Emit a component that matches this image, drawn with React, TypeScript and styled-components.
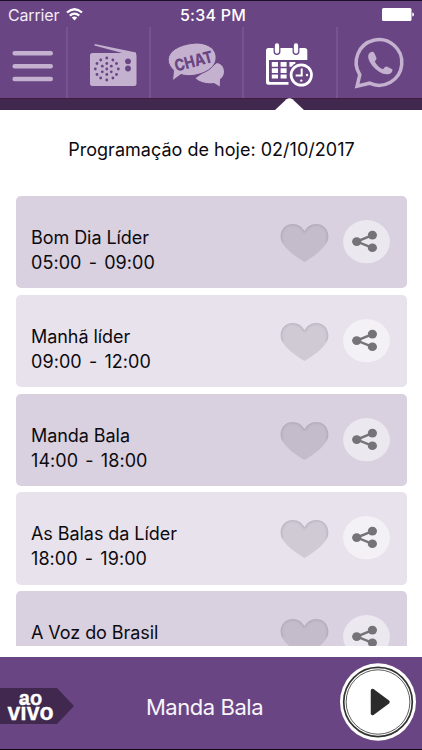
import React from "react";
import styled, { createGlobalStyle } from "styled-components";

const colors = {
  purple: "#6a4583",
  divider: "#77538f",
  deep: "#41284f",
  lilac: "#c3b1cf",
};

const GlobalStyle = createGlobalStyle`
  * { box-sizing: border-box; }
  body { margin: 0; background: #fff; }
  svg { display: block; }
  button { border: 0; padding: 0; background: none; font: inherit; }
`;

const Screen = styled.div`
  width: 422px;
  height: 750px;
  overflow: hidden;
  display: flex;
  flex-direction: column;
  font-family: Inter, "Liberation Sans", sans-serif;
  color: #0c0a0e;
`;

const StatusBar = styled.header`
  height: 27px;
  flex: none;
  border-top: 1px solid #1c1026;
  background: ${colors.purple};
  color: #fff;
  display: grid;
  grid-template-columns: 1fr auto 1fr;
  align-items: center;
  padding: 1px 8px 0 8px;
  font-size: 16px;
`;

const Carrier = styled.div`
  display: flex;
  align-items: center;
  gap: 7px;
  color: #f3ecf7;
  letter-spacing: -0.15px;
`;

const Clock = styled.div`
  font-weight: 500;
  letter-spacing: 0.25px;
  padding-left: 4px;
`;

const Battery = styled.div`
  justify-self: end;
`;

const Nav = styled.nav`
  height: 71px;
  flex: none;
  display: grid;
  grid-template-columns: 68px 83px 93px 94px 84px;
  background: ${colors.purple};
`;

const NavItem = styled.button<{ $active?: boolean }>`
  color: ${(p) => (p.$active ? "#fff" : colors.lilac)};
  border-right: 2px solid ${colors.divider};
  &:last-child { border-right: 0; }
  svg { width: 100%; height: 71px; }
`;

const Strip = styled.div`
  height: 12px;
  flex: none;
  position: relative;
  border-top: 1px solid #421a3b;
  background: ${colors.deep};
`;

const Pointer = styled.svg`
  position: absolute;
  left: 274px;
  top: -1px;
`;

const Main = styled.main`
  height: 536px;
  flex: none;
  overflow: hidden;
  padding: 0 15px 0 16px;
`;

const Heading = styled.h1`
  margin: 0;
  height: 86px;
  padding: 28px 0 0;
  font-size: 18px;
  line-height: 24px;
  font-weight: 400;
  text-align: center;
  letter-spacing: 0.02px;
`;

const List = styled.div`
  display: flex;
  flex-direction: column;
  gap: 6.4px;
`;

const Card = styled.article<{ $light: boolean }>`
  height: 92.4px;
  flex: none;
  border-radius: 5px;
  background: ${(p) => (p.$light ? "#e8e2ed" : "#d9d0e0")};
  display: flex;
  padding-left: 15px;
`;

const Info = styled.div`
  flex: 1;
  padding-top: 29px;
  font-size: 18px;
  line-height: 25px;
`;

const Title = styled.div`
  letter-spacing: -0.06px;
`;

const Time = styled.div`
  letter-spacing: 0.07px;
  word-spacing: 2px;
`;

const IconButton = styled.button<{ $gap: number; $top: number }>`
  align-self: flex-start;
  margin: ${(p) => p.$top}px ${(p) => p.$gap}px 0 0;
`;

const Player = styled.footer`
  height: 93px;
  flex: none;
  margin-top: 11px;
  background: ${colors.purple};
  border-bottom: 1px solid #0c0710;
  display: flex;
  align-items: center;
  justify-content: space-between;
`;

const Live = styled.div`
  width: 74px;
  height: 36px;
  margin-top: 6px;
  padding: 3px 13px 0 0;
  background: ${colors.deep};
  clip-path: polygon(0 0, 57px 0, 100% 50%, 57px 100%, 0 100%);
  color: #fff;
  font-family: "Liberation Sans", Arial, sans-serif;
  font-weight: 700;
  text-align: center;
`;

const LiveWord = styled.div<{ $size: number }>`
  height: 14px;
  font-size: ${(p) => p.$size}px;
  line-height: 14px;
  -webkit-text-stroke: 0.3px #fff;
`;

const NowPlaying = styled.div`
  padding: 7px 5px 0 0;
  font-size: 22px;
  letter-spacing: -0.45px;
  color: #f8f4fa;
`;

const PlayButton = styled.button`
  margin: -2px 6px 0 0;
`;

const shows = [
  ["Bom Dia Líder", "05:00 - 09:00"],
  ["Manhã líder", "09:00 - 12:00"],
  ["Manda Bala", "14:00 - 18:00"],
  ["As Balas da Líder", "18:00 - 19:00"],
  ["A Voz do Brasil", ""],
];

const speaker = [
  [106.8, 58], [100.7, 60], [112.9, 60], [97, 63.5], [116.5, 63.5], [102.3, 66.2], [111.3, 66.2],
  [106.8, 63.5], [106.8, 69], [95.3, 69], [118.3, 69], [97, 74.5], [116.5, 74.5],
  [102.3, 71.8], [111.3, 71.8], [106.8, 74.5], [100.7, 78], [112.9, 78], [106.8, 80],
];

const Wifi = () => (
  <svg width="17" height="13" viewBox="0 0 17 13" fill="none" stroke="#fff" strokeWidth="2.2">
    <path d="M1 4.5Q8.5-2 16 4.5M3.8 7.6q4.7-4 9.4 0" />
    <path d="M5.8 9.6q2.7-2 5.4 0L8.5 12.4z" fill="#fff" stroke="none" />
  </svg>
);

const MenuIcon = () => (
  <svg viewBox="0 27 66 71" stroke="currentColor" strokeWidth="4.6" strokeLinecap="round">
    <path d="M14.7 53.3h36M14.7 66.3h36M14.7 79h36" />
  </svg>
);

const RadioIcon = () => (
  <svg viewBox="68 27 81 71" fill="currentColor">
    <path d="M94.8 43.9 136 52.6v2h-8L94.3 45.6z" />
    <rect x="90" y="53" width="46.5" height="33" rx="2.5" />
    <g fill={colors.purple}>
      {speaker.map(([x, y]) => <circle key={`${x}-${y}`} cx={x} cy={y} r="1.4" />)}
      <circle cx="128" cy="61.3" r="2.9" />
      <circle cx="128" cy="68.5" r="2.9" />
    </g>
  </svg>
);

const ChatIcon = () => (
  <svg viewBox="151 27 91 71" fill="currentColor">
    <path d="M217 63c5 1 7 5 7 8.800 0 3-1.500 5.500-4 7.500l-.2 7.200-5.800-3.500c-7 1-14-.6-18.500-4.800z" />
    <path d="M193 43.300c11-1.500 22 3.500 23 12.500 1.200 11-10 17.500-22 19.500-5 .8-10 .2-13-.8l-8.500 6.300 1-10.500c-3-3-5.500-6.500-5.300-11 .5-8.500 11-14.500 24.800-16z" stroke={colors.purple} strokeWidth="1" />
    <text x="193.500" y="67" fontFamily="Inter, sans-serif" fontSize="16.500" fontWeight="800" textAnchor="middle" textLength="39" lengthAdjust="spacingAndGlyphs" fill={colors.purple} transform="rotate(-15 193.500 61)">CHAT</text>
  </svg>
);

const ScheduleIcon = () => (
  <svg viewBox="244 27 92 71" fill="currentColor">
    <path d="M268.500 48h36q2.800 0 2.800 2.800V60H269v20.500q0 1.500 1.500 1.500h18v2.800h-20q-2.500 0-2.500-2.500V50.800q0-2.800 2.500-2.800z" />
    <path d="M271.800 62h6.200v4.700h-6.200zm8.800 0h6v4.700h-6zm8.800 0h6v4.700h-6zm-17.600 6.200h6.200v4.700h-6.200zm8.800 0h6v4.700h-6zm-8.800 6.200h6.200v4h-6.200zm8.800 0h6v4h-6z" />
    <g stroke={colors.purple} strokeWidth="1.300">
      <rect x="274.200" y="42.600" width="5.600" height="11.700" rx="2.800" />
      <rect x="293.200" y="42.600" width="5.600" height="11.700" rx="2.800" />
    </g>
    <circle cx="301.300" cy="75" r="12.800" fill={colors.purple} />
    <circle cx="301.300" cy="75" r="10.200" fill="none" stroke="currentColor" strokeWidth="2.700" />
    <path d="M301.700 68.500v7h-6" fill="none" stroke="currentColor" strokeWidth="2" />
    <circle cx="307" cy="75" r="1.200" />
    <circle cx="301.300" cy="80.600" r="1.200" />
  </svg>
);

const WhatsappIcon = () => (
  <svg viewBox="338 27 84 71">
    <path d="M359.800 74.700a22.800 22.800 0 1 1 9.800 8.500l-12.500 3z" fill="none" stroke="currentColor" strokeWidth="3.500" />
    <path d="M370.500 52.300c1.500-1 3-.8 3.800.8l2 4.300c.6 1.500-.2 2.600-1.600 3.900 1.500 3.700 4.500 6.500 8.300 8 1.500-2 2.600-3.200 4.200-2.600l4.600 2.200c1.300.7.700 2.300-.3 3.500-5 5-13.500-.6-17.500-4.800-4.500-4.800-8.500-12.300-3.500-15.300z" fill="currentColor" />
  </svg>
);

const HeartIcon = () => (
  <svg width="49" height="40" viewBox="0 0 49 40">
    <defs>
      <clipPath id="heartClip">
        <path d="M24.500 39C17 34.500 7 28 2 19.500-2 11 3 1 12.500 1c6 0 9.500 3 12 7.300C27 4 30.500 1 36.500 1 46 1 51 11 47 19.500 42 28 32 34.500 24.500 39z" />
      </clipPath>
      <filter id="inset"><feGaussianBlur stdDeviation="1" /></filter>
    </defs>
    <g clipPath="url(#heartClip)">
      <rect width="49" height="40" fill="#77737a" fillOpacity=".21" />
      <path d="M2 19.500C-2 11 3 1 12.500 1c6 0 9.500 3 12 7.300C27 4 30.500 1 36.500 1 46 1 51 11 47 19.500" fill="none" stroke="#6e6673" strokeOpacity=".28" strokeWidth="2" filter="url(#inset)" />
    </g>
  </svg>
);

const ShareIcon = () => (
  <svg width="47" height="44" viewBox="0 0 47 44">
    <ellipse cx="23.500" cy="21.700" rx="23.400" ry="21.600" fill="#fff" fillOpacity=".5" />
    <path d="M29.500 15.200 13.800 21.600l15.700 6.200" fill="none" stroke="#767378" strokeWidth="2.400" />
    <g fill="#767378">
      <ellipse cx="29.400" cy="15.100" rx="4.600" ry="4.300" />
      <ellipse cx="13.700" cy="21.600" rx="4.600" ry="4.300" />
      <ellipse cx="29.400" cy="27.700" rx="4.600" ry="4.300" />
    </g>
  </svg>
);

const PlayIcon = () => (
  <svg width="76" height="78" viewBox="0 0 76 78">
    <ellipse cx="38" cy="39" rx="38" ry="38.800" fill="#fff" />
    <g fill="none" stroke="#333">
      <ellipse cx="38" cy="39" rx="34.300" ry="34.600" strokeWidth="1.700" />
      <ellipse cx="38" cy="39" rx="31.900" ry="32.200" strokeWidth=".8" />
    </g>
    <path d="M32.500 27.500 48 39 32.500 50.500z" fill="#2b2b2b" stroke="#2b2b2b" strokeWidth="3.500" strokeLinejoin="round" />
  </svg>
);

export default function App() {
  return (
    <>
      <GlobalStyle />
      <Screen>
        <StatusBar>
          <Carrier>Carrier <Wifi /></Carrier>
          <Clock>5:34 PM</Clock>
          <Battery>
            <svg width="32" height="13" viewBox="0 0 32 13" fill="#fff">
              <rect width="29.500" height="13" rx="1.500" />
              <path d="M30.300 4.500q1.700 0 1.700 2t-1.700 2z" />
            </svg>
          </Battery>
        </StatusBar>
        <Nav>
          <NavItem aria-label="Menu"><MenuIcon /></NavItem>
          <NavItem aria-label="Rádio"><RadioIcon /></NavItem>
          <NavItem aria-label="Chat"><ChatIcon /></NavItem>
          <NavItem aria-label="Programação" $active><ScheduleIcon /></NavItem>
          <NavItem aria-label="WhatsApp"><WhatsappIcon /></NavItem>
        </Nav>
        <Strip>
          <Pointer width="31" height="13" viewBox="0 0 31 13" fill="#fff">
            <path d="M0 13 12.500 1.300q3-2.300 6 0L31 13z" />
          </Pointer>
        </Strip>
        <Main>
          <Heading>Programação de hoje: 02/10/2017</Heading>
          <List>
            {shows.map(([title, time], i) => (
              <Card key={title} $light={i % 2 === 1}>
                <Info>
                  <Title>{title}</Title>
                  <Time>{time}</Time>
                </Info>
                <IconButton $gap={13.500} $top={27} aria-label="Favoritar"><HeartIcon /></IconButton>
                <IconButton $gap={17.500} $top={24} aria-label="Compartilhar"><ShareIcon /></IconButton>
              </Card>
            ))}
          </List>
        </Main>
        <Player>
          <Live>
            <LiveWord $size={20}>ao</LiveWord>
            <LiveWord $size={23}>vivo</LiveWord>
          </Live>
          <NowPlaying>Manda Bala</NowPlaying>
          <PlayButton aria-label="Tocar"><PlayIcon /></PlayButton>
        </Player>
      </Screen>
    </>
  );
}
